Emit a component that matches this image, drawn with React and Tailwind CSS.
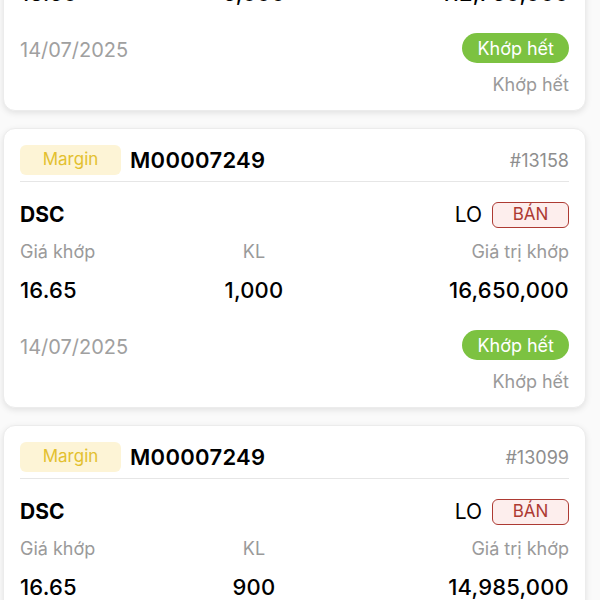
const orders = [
  { id: '#13160', symbol: 'DSC', price: '16.50', qty: '5,000', value: '112,750,000' },
  { id: '#13158', symbol: 'DSC', price: '16.65', qty: '1,000', value: '16,650,000' },
  { id: '#13099', symbol: 'DSC', price: '16.65', qty: '900', value: '14,985,000' },
];

function OrderCard({ id, symbol, price, qty, value }) {
  return (
    <div className="h-[280px] rounded-[12px] bg-white border border-[#ececec] shadow-[0_2px_6px_rgba(0,0,0,0.10)] px-4 pt-[16px]">
      <div className="flex items-center h-[30px]">
        <span className="w-[101px] h-[30px] rounded-[6px] bg-[#fdf4d6] text-[#e3c02f] text-[17px] flex items-center justify-center">
          Margin
        </span>
        <span className="ml-[9px] text-[22px] font-semibold text-black tracking-[0.3px]">
          M00007249
        </span>
        <span className="ml-auto text-[18px] text-[#8e8e8e]">{id}</span>
      </div>
      <div className="mt-[6px] border-t border-[#e6e6e6]" />
      <div className="flex items-center justify-between mt-[20px] h-[26px]">
        <span className="text-[21px] font-bold text-black">{symbol}</span>
        <div className="flex items-center gap-[10px]">
          <span className="text-[21px] text-black">LO</span>
          <span className="w-[77px] h-[26px] rounded-[6px] border border-[#ad3a33] bg-[#fdeeed] text-[#ad3a33] text-[17px] flex items-center justify-center">
            BÁN
          </span>
        </div>
      </div>
      <div className="grid grid-cols-[188px_92px_1fr] mt-[12px] text-[18px] text-[#9a9a9a] leading-[24px]">
        <span>Giá khớp</span>
        <span className="text-center">KL</span>
        <span className="text-right">Giá trị khớp</span>
      </div>
      <div className="grid grid-cols-[188px_92px_1fr] mt-[12px] text-[22px] font-medium text-black leading-[28px] tracking-[0.2px]">
        <span>{price}</span>
        <span className="text-center">{qty}</span>
        <span className="text-right">{value}</span>
      </div>
      <div className="flex items-center justify-between mt-[26px]">
        <span className="text-[20px] text-[#a0a0a0] translate-y-[2px]">14/07/2025</span>
        <span className="h-[30px] px-[15px] rounded-full bg-[#7cc241] text-white text-[18px] flex items-center">
          Khớp hết
        </span>
      </div>
      <div className="text-right mt-[8px] text-[18px] text-[#9a9a9a]">Khớp hết</div>
    </div>
  );
}

export default function App() {
  return (
    <div className="w-[600px] h-[600px] overflow-hidden bg-[#fafafa] font-['Inter','Liberation_Sans',sans-serif]">
      <div className="flex flex-col gap-[17px] pl-[3px] pr-[14px] -mt-[169px]">
        {orders.map((o) => (
          <OrderCard key={o.id} {...o} />
        ))}
      </div>
    </div>
  );
}
